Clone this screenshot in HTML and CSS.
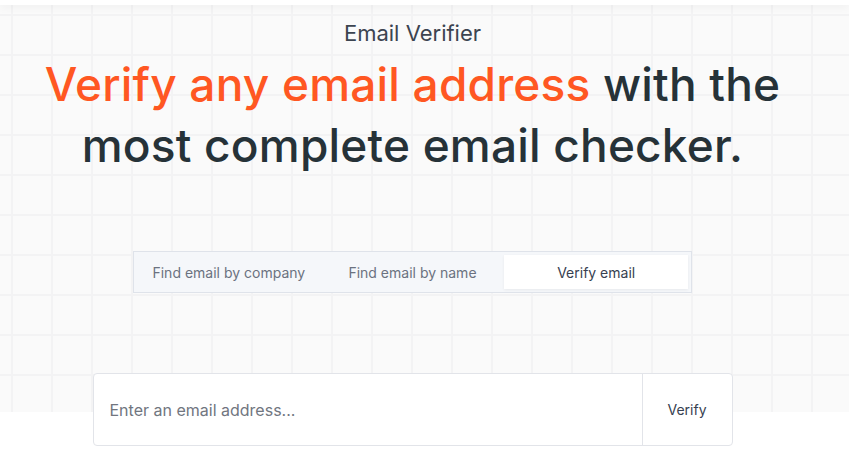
FILE: index.html
```html
<!DOCTYPE html>
<html lang="en">
<head>
    <meta charset="UTF-8">
    <meta name="viewport" content="width=device-width, initial-scale=1.0">
    <title>Email Verifier</title>
    <link rel="stylesheet" href="styles.css">
</head>
<body>
    <div class="topbar"></div>
    <section class="hero">
        <div class="container">
            <p class="eyebrow">Email Verifier</p>
            <h1 class="headline"><span class="accent">Verify any email address</span> with the most complete email checker.</h1>
            <div class="tabs">
                <button class="tab">Find email by company</button>
                <button class="tab">Find email by name</button>
                <button class="tab active">Verify email</button>
            </div>
            <form class="verify-form" onsubmit="return false">
                <input type="email" class="verify-input" placeholder="Enter an email address...">
                <button class="verify-btn" type="submit">Verify</button>
            </form>
        </div>
    </section>
</body>
</html>
```

FILE: styles.css
```css
body {
    margin: 0;
    font-family: 'Inter', 'Noto Sans', sans-serif;
    background-color: #fff;
    color: #263238;
}
.topbar {
    height: 5px;
    background: #fff;
    box-shadow: 0 2px 8px rgba(0, 0, 0, 0.06);
    position: relative;
    z-index: 1;
}
.hero {
    background-color: #fafafa;
    background-image:
        linear-gradient(to bottom, transparent 407px, #fff 407px),
        linear-gradient(to right, #f3f3f4 2px, transparent 2px),
        linear-gradient(to bottom, #f3f3f4 2px, transparent 2px);
    background-size: 100% 100%, 40px 40px, 40px 40px;
    background-repeat: no-repeat, repeat, repeat;
    background-position: 0 0, 11px 9px, 11px 9px;
    padding-bottom: 10px;
}
.container {
    width: 825px;
    display: flex;
    flex-direction: column;
    align-items: center;
    padding-top: 13px;
}
.eyebrow {
    margin: 0;
    font-size: 22px;
    line-height: 30px;
    color: #3c4450;
}
.headline {
    margin: 6px 0 0;
    width: 800px;
    text-align: center;
    font-size: 46px;
    line-height: 61px;
    font-weight: 500;
    letter-spacing: 0.2px;
    color: #263238;
}
.accent {
    color: #ff5722;
}
.tabs {
    margin-top: 75px;
    width: 559px;
    box-sizing: border-box;
    display: grid;
    grid-template-columns: repeat(3, 1fr);
    padding: 3px;
    background: #f5f7fa;
    border: 1px solid #dfe3ea;
}
.tab {
    height: 34px;
    border: 0;
    background: transparent;
    font-family: inherit;
    font-size: 14px;
    color: #6b7280;
    cursor: pointer;
}
.tab.active {
    background: #fff;
    color: #374151;
    box-shadow: 0 1px 3px rgba(0, 0, 0, 0.06);
}
.verify-form {
    margin-top: 80px;
    width: 640px;
    height: 73px;
    box-sizing: border-box;
    display: flex;
    background: #fff;
    border: 1px solid #e2e4e9;
    border-radius: 4px;
}
.verify-input {
    flex: 1;
    border: 0;
    padding: 0 16px;
    font-family: inherit;
    font-size: 16px;
    color: #374151;
    background: transparent;
    outline: none;
}
.verify-input::placeholder {
    color: #71767f;
}
.verify-btn {
    width: 90px;
    border: 0;
    border-left: 1px solid #e2e4e9;
    background: transparent;
    font-family: inherit;
    font-size: 14px;
    color: #374151;
    cursor: pointer;
}
```
